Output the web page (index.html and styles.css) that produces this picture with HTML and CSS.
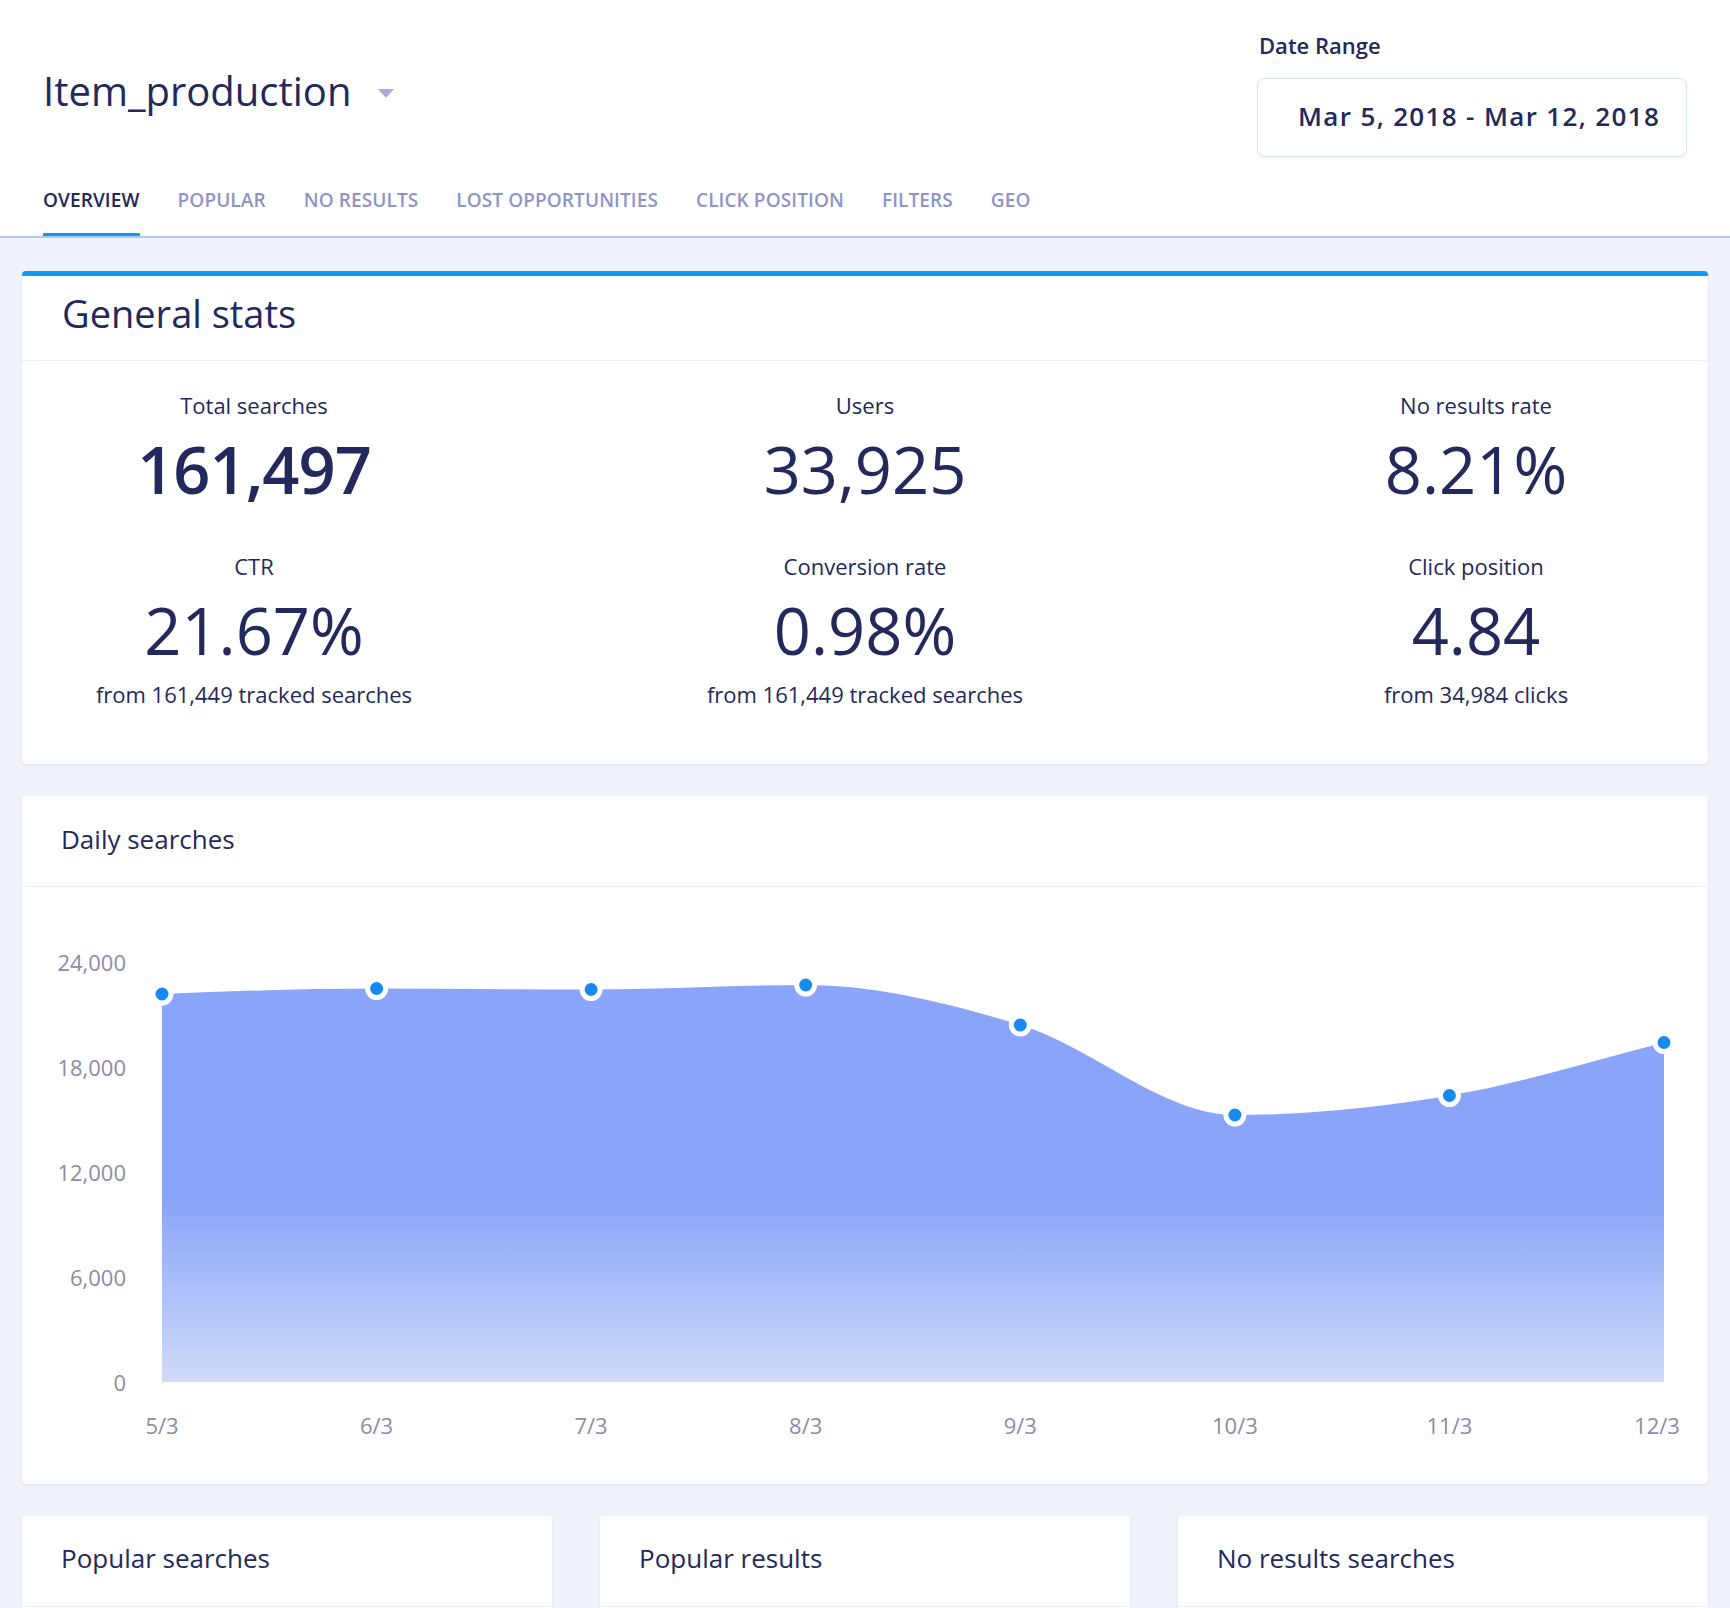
FILE: index.html
```html
<!DOCTYPE html>
<html lang="en">
<head>
<meta charset="utf-8">
<title>Item_production – Overview</title>
<link rel="stylesheet" href="styles.css">
</head>
<body>
<header class="topbar">
  <div class="topbar-row">
    <div class="app-title">
      <h1>Item_production</h1>
      <span class="caret"></span>
    </div>
    <div class="date-range">
      <div class="date-label">Date Range</div>
      <div class="date-box">Mar 5, 2018 - Mar 12, 2018</div>
    </div>
  </div>
  <nav class="tabs">
    <a class="tab active">Overview</a>
    <a class="tab">Popular</a>
    <a class="tab">No results</a>
    <a class="tab">Lost opportunities</a>
    <a class="tab">Click position</a>
    <a class="tab">Filters</a>
    <a class="tab">Geo</a>
  </nav>
</header>

<main class="content">
  <section class="card card-accent">
    <h2 class="card-title card-title-lg">General stats</h2>
    <div class="stats">
      <div class="stat">
        <div class="stat-label">Total searches</div>
        <div class="stat-value stat-strong">161,497</div>
      </div>
      <div class="stat">
        <div class="stat-label">Users</div>
        <div class="stat-value">33,925</div>
      </div>
      <div class="stat">
        <div class="stat-label">No results rate</div>
        <div class="stat-value">8.21%</div>
      </div>
      <div class="stat">
        <div class="stat-label">CTR</div>
        <div class="stat-value">21.67%</div>
        <div class="stat-sub">from 161,449 tracked searches</div>
      </div>
      <div class="stat">
        <div class="stat-label">Conversion rate</div>
        <div class="stat-value">0.98%</div>
        <div class="stat-sub">from 161,449 tracked searches</div>
      </div>
      <div class="stat">
        <div class="stat-label">Click position</div>
        <div class="stat-value">4.84</div>
        <div class="stat-sub">from 34,984 clicks</div>
      </div>
    </div>
  </section>

  <section class="card card-chart">
    <h2 class="card-title">Daily searches</h2>
    <svg class="chart" width="1686" height="597" viewBox="0 0 1686 597">
      <defs>
        <linearGradient id="areaFill" gradientUnits="userSpaceOnUse" x1="0" y1="0" x2="0" y2="495">
          <stop offset="0" stop-color="#89a4f8"/>
          <stop offset="0.63" stop-color="#89a4f8"/>
          <stop offset="1" stop-color="#d0dbf8"/>
        </linearGradient>
      </defs>
      <g class="y-axis">
        <text x="104" y="84">24,000</text>
        <text x="104" y="189">18,000</text>
        <text x="104" y="294">12,000</text>
        <text x="104" y="399">6,000</text>
        <text x="104" y="504">0</text>
      </g>
      <path class="area" fill="url(#areaFill)" d="M140,495 L140,107 C211.5,104.25 283.1,101.5 354.6,101.5 C426.1,101.5 497.6,102.5 569.1,102.5 C640.6,102.5 712.2,98 783.7,98 C855.2,98 926.8,116.3 998.3,138 C1069.8,159.7 1141.4,228 1212.9,228 C1284.4,228 1355.9,220.6 1427.4,208.5 C1498.9,196.4 1570.5,173.8 1642,155.5 L1642,495 Z"/>
      <g class="dots">
        <circle cx="140" cy="107" r="9"/>
        <circle cx="354.6" cy="101.5" r="9"/>
        <circle cx="569.1" cy="102.5" r="9"/>
        <circle cx="783.7" cy="98" r="9"/>
        <circle cx="998.3" cy="138" r="9"/>
        <circle cx="1212.9" cy="228" r="9"/>
        <circle cx="1427.4" cy="208.5" r="9"/>
        <circle cx="1642" cy="155.5" r="9"/>
      </g>
      <g class="x-axis">
        <text x="140" y="547">5/3</text>
        <text x="354.6" y="547">6/3</text>
        <text x="569.1" y="547">7/3</text>
        <text x="783.7" y="547">8/3</text>
        <text x="998.3" y="547">9/3</text>
        <text x="1212.9" y="547">10/3</text>
        <text x="1427.4" y="547">11/3</text>
        <text x="1635" y="547">12/3</text>
      </g>
    </svg>
  </section>

  <div class="bottom-row">
    <section class="card card-small">
      <h2 class="card-title">Popular searches</h2>
      <div class="card-body"></div>
    </section>
    <section class="card card-small">
      <h2 class="card-title">Popular results</h2>
      <div class="card-body"></div>
    </section>
    <section class="card card-small">
      <h2 class="card-title">No results searches</h2>
      <div class="card-body"></div>
    </section>
  </div>
</main>
</body>
</html>
```

FILE: styles.css
```css
* {
  box-sizing: border-box;
}

html, body {
  margin: 0;
  padding: 0;
}

body {
  background: #f0f3fa;
  font-family: "Open Sans", "Noto Sans", "DejaVu Sans", sans-serif;
  color: #23295c;
}

/* ---------- Header ---------- */
.topbar {
  background: #ffffff;
  border-bottom: 2px solid #b7c5f4;
  padding: 0 43px 0 43px;
}

.topbar-row {
  display: flex;
  justify-content: space-between;
  align-items: flex-start;
  height: 158px;
  padding-top: 30px;
}

.app-title {
  display: flex;
  align-items: center;
  margin-top: 34px;
}

.app-title h1 {
  margin: 0;
  font-size: 40px;
  font-weight: 400;
  line-height: 54px;
  color: #23295c;
}

.caret {
  width: 0;
  height: 0;
  border-left: 8px solid transparent;
  border-right: 8px solid transparent;
  border-top: 9px solid #a7acdc;
  margin-left: 27px;
  margin-top: 5px;
}

.date-range {
  width: 430px;
}

.date-label {
  font-size: 22px;
  font-weight: 600;
  line-height: 30px;
  padding-left: 2px;
  margin-bottom: 18px;
}

.date-box {
  height: 79px;
  border: 1px solid #dde4f4;
  border-radius: 8px;
  box-shadow: 0 1px 3px rgba(60, 80, 150, 0.08);
  font-size: 26px;
  font-weight: 600;
  line-height: 74px;
  letter-spacing: 1.35px;
  padding-left: 40px;
  white-space: nowrap;
}

.tabs {
  display: flex;
  gap: 38px;
  margin-top: 30px;
}

.tab {
  font-size: 19px;
  font-weight: 600;
  line-height: 24px;
  letter-spacing: 0.1px;
  text-transform: uppercase;
  color: #8f94c8;
  padding-bottom: 21px;
  border-bottom: 3px solid transparent;
  cursor: pointer;
}

.tab.active {
  color: #23295c;
  border-bottom-color: #0c9cf6;
}

/* ---------- Content ---------- */
.content {
  padding: 33px 22px 0;
  display: flex;
  flex-direction: column;
  gap: 32px;
}

.card {
  background: #ffffff;
  border-radius: 4px;
  box-shadow: 0 1px 3px rgba(40, 60, 130, 0.09);
}

.card-accent {
  border-top: 5px solid #0c9cf6;
}

.card-title {
  margin: 0;
  font-size: 26px;
  font-weight: 400;
  line-height: 36px;
  padding: 25px 0 29px 39px;
  border-bottom: 1px solid #edf0f8;
}

.card-title-lg {
  font-size: 38px;
  line-height: 52px;
  padding: 11px 0 21px 40px;
}

.stats {
  display: grid;
  grid-template-columns: repeat(3, 420px);
  justify-content: space-between;
  row-gap: 42px;
  padding: 29px 22px 55px;
}

.stat {
  display: flex;
  flex-direction: column;
  align-items: center;
}

.stat-label {
  font-size: 22px;
  line-height: 30px;
}

.stat-value {
  font-size: 65px;
  line-height: 80px;
  margin-top: 9px;
  font-weight: 400;
}

.stat-strong {
  font-weight: 600;
  letter-spacing: -1px;
}

.stat-sub {
  font-size: 22px;
  line-height: 30px;
  margin-top: 9px;
}

/* ---------- Chart ---------- */
.chart {
  display: block;
}

.chart text {
  font-family: "Open Sans", "Noto Sans", sans-serif;
  font-size: 22px;
  fill: #8d8ba8;
}

.y-axis text {
  text-anchor: end;
}

.x-axis text {
  text-anchor: middle;
}

.dots circle {
  fill: #168af0;
  stroke: #ffffff;
  stroke-width: 5;
}

/* ---------- Bottom cards ---------- */
.bottom-row {
  display: grid;
  grid-template-columns: repeat(3, 1fr);
  gap: 48px;
}

.card-small {
  border-radius: 4px 4px 0 0;
}

.card-small .card-title {
  padding: 24px 0 30px 39px;
}

.card-body {
  height: 2px;
}
```
